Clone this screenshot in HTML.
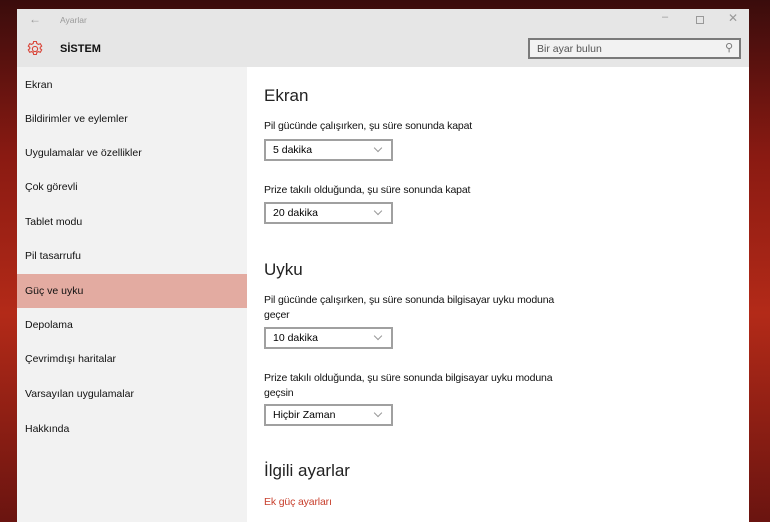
<!DOCTYPE html>
<html><head><meta charset="utf-8"><style>
*{margin:0;padding:0;box-sizing:border-box}
body{width:770px;height:522px;overflow:hidden;position:relative;font-family:"Liberation Sans",sans-serif;color:#000;
background:linear-gradient(180deg,#3a0c0c 0%,#8a1a12 30%,#b32a18 60%,#6a1410 100%)}
.a{position:absolute;white-space:nowrap}
.win{position:absolute;left:17px;top:9px;width:732px;height:513px;background:#fff}
.tb{position:absolute;left:0;top:0;width:732px;height:58px;background:#e6e6e6}
.side{position:absolute;left:0;top:58px;width:230px;height:455px;background:#f2f2f2}
.nav{position:absolute;left:8px;font-size:10.5px;color:#111}
.sel{position:absolute;left:0;top:207px;width:230px;height:34px;background:#e3aba1}
.lbl{font-size:10.5px;letter-spacing:-0.15px;color:#111;line-height:15px}
.dd{position:absolute;width:129px;height:22px;border:2px solid #a0a0a0;background:#fff;font-size:10.5px;padding:3px 0 0 7px}
.dd:after{content:"";position:absolute;right:10px;top:4px;width:5px;height:5px;border-right:1px solid #999;border-bottom:1px solid #999;transform:rotate(45deg)}
.h{font-size:17px;color:#222}
</style></head><body>
<div class="win">
<div class="tb">
 <div class="a" style="left:12px;top:3px;font-size:12px;color:#999">←</div>
 <div class="a" style="left:43px;top:6px;font-size:8.5px;color:#999">Ayarlar</div>
 <div class="a" style="left:645px;top:2px;font-size:11px;color:#999">–</div>
 <div class="a" style="left:679px;top:7px;width:8px;height:8px;border:1px solid #999"></div>
 <div class="a" style="left:711px;top:2px;font-size:12px;color:#999">✕</div>
 <svg class="a" style="left:9px;top:31px" width="18" height="18" viewBox="0 0 18 18"><g fill="none" stroke="#d9463a" stroke-width="1.1"><circle cx="9" cy="9" r="2.6"/><path d="M7.6 1.5h2.8l.4 2 1.6.9 1.9-.7 1.4 2.4-1.5 1.3v1.2l1.5 1.3-1.4 2.4-1.9-.7-1.6.9-.4 2H7.6l-.4-2-1.6-.9-1.9.7-1.4-2.4 1.5-1.3V7.4L2.3 6.1l1.4-2.4 1.9.7 1.6-.9z"/></g></svg>
 <div class="a" style="left:43px;top:34px;font-size:11px;font-weight:bold;color:#111">SİSTEM</div>
 <div class="a" style="left:511px;top:29px;width:213px;height:21px;border:2px solid #7a7a7a;background:#f2f2f2;font-size:10.5px;color:#555;padding:3px 0 0 7px">Bir ayar bulun<span style="position:absolute;right:6px;top:1px;color:#777;font-size:11px;transform:scaleX(-1);display:inline-block">⚲</span></div>
</div>
<div class="side">
 <div class="sel"></div>
 <div class="nav" style="top:12px">Ekran</div>
 <div class="nav" style="top:46px">Bildirimler ve eylemler</div>
 <div class="nav" style="top:80px">Uygulamalar ve özellikler</div>
 <div class="nav" style="top:114px">Çok görevli</div>
 <div class="nav" style="top:149px">Tablet modu</div>
 <div class="nav" style="top:183px">Pil tasarrufu</div>
 <div class="nav" style="top:218px">Güç ve uyku</div>
 <div class="nav" style="top:252px">Depolama</div>
 <div class="nav" style="top:286px">Çevrimdışı haritalar</div>
 <div class="nav" style="top:321px">Varsayılan uygulamalar</div>
 <div class="nav" style="top:356px">Hakkında</div>
</div>
<div class="a h" style="left:247px;top:77px">Ekran</div>
<div class="a lbl" style="left:247px;top:110px">Pil gücünde çalışırken, şu süre sonunda kapat</div>
<div class="dd" style="left:247px;top:130px">5 dakika</div>
<div class="a lbl" style="left:247px;top:174px">Prize takılı olduğunda, şu süre sonunda kapat</div>
<div class="dd" style="left:247px;top:193px">20 dakika</div>
<div class="a h" style="left:247px;top:251px">Uyku</div>
<div class="a lbl" style="left:247px;top:284px">Pil gücünde çalışırken, şu süre sonunda bilgisayar uyku moduna<br>geçer</div>
<div class="dd" style="left:247px;top:318px">10 dakika</div>
<div class="a lbl" style="left:247px;top:362px">Prize takılı olduğunda, şu süre sonunda bilgisayar uyku moduna<br>geçsin</div>
<div class="dd" style="left:247px;top:395px">Hiçbir Zaman</div>
<div class="a h" style="left:247px;top:452px">İlgili ayarlar</div>
<div class="a lbl" style="left:247px;top:486px;color:#c8402e">Ek güç ayarları</div>
</div>
</body></html>
